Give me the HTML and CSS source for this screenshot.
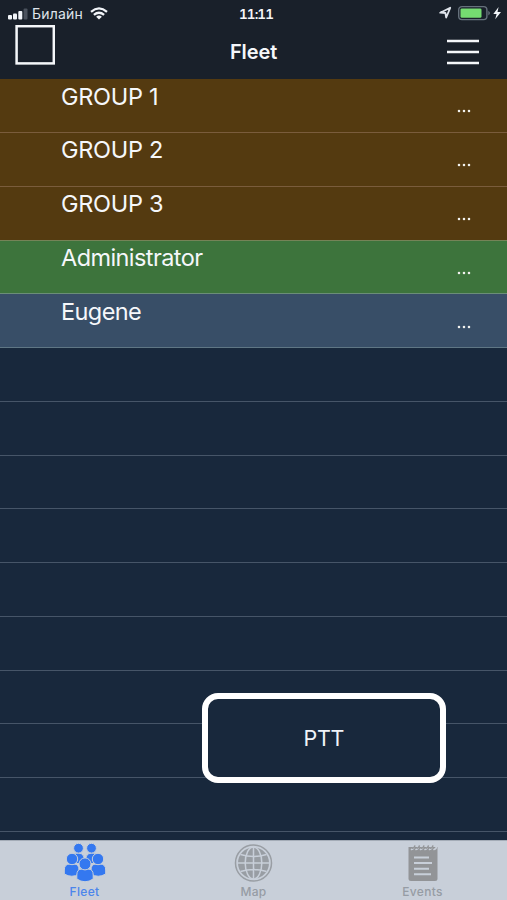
FILE: index.html
```html
<!DOCTYPE html>
<html lang="en">
<head>
<meta charset="utf-8">
<title>Fleet</title>
<link rel="stylesheet" href="styles.css">
</head>
<body>
<div class="app">
  <header class="header">
    <div class="status">
      <div class="carrier">
        <svg width="20" height="12" viewBox="0 0 20 12"><g fill="#f2f5f9"><rect x="0" y="7" width="4" height="4.500" rx="1"/><rect x="5" y="5.500" width="4" height="6" rx="1"/><rect x="10.300" y="3" width="4" height="8.500" rx="1"/></g><rect x="15.600" y="0.500" width="3.900" height="11" rx="1" fill="#4b525d"/></svg>
        <span class="carrier-name">Билайн</span>
        <svg class="wifi" width="18" height="13" viewBox="0 0 18 13"><g fill="none" stroke="#f2f5f9" stroke-width="2.300"><path d="M1 4.800Q9-2 17 4.800"/><path d="M3.900 7.900Q9 3.600 14.100 7.900"/></g><path d="M6.100 9.700Q9 7.400 11.900 9.700L9 12.600Z" fill="#f2f5f9"/></svg>
      </div>
      <span class="time">11:11</span>
      <div class="power">
        <svg width="64" height="16" viewBox="0 0 64 16"><path d="M1.200 7.700L11.200 2.800L7.200 12.500L6.400 8Z" fill="none" stroke="#dfe4eb" stroke-width="1.800" stroke-linejoin="round"/><rect x="19.700" y="1.600" width="28.200" height="13" rx="3.300" fill="none" stroke="#66717c" stroke-width="1.400"/><rect x="21.500" y="3.400" width="21" height="9.400" rx="1.400" fill="#75dc71"/><path d="M49.300 5.700Q52.700 8 49.300 10.400Z" fill="#66717c"/><path d="M59.600 2L54.300 9H57.600L56.200 14.200L62 7.100H58.500Z" fill="#f2f5f9"/></svg>
      </div>
    </div>
    <div class="nav">
      <svg class="square" width="40" height="40" viewBox="0 0 40 40"><rect x="1.600" y="1.200" width="37.200" height="37.200" fill="none" stroke="#f5f7fa" stroke-width="2.500"/></svg>
      <h1 class="title">Fleet</h1>
      <svg class="menu" width="32" height="26" viewBox="0 0 32 26"><path d="M0 2H32M0 13H32M0 24H32" stroke="#f5f7fa" stroke-width="2.700"/></svg>
    </div>
  </header>
  <main class="list">
    <div class="row group"><span class="name">GROUP 1</span><svg class="more" viewBox="0 0 14 4"><path d="M2 2h0M7 2h0M12 2h0"/></svg></div>
    <div class="row group"><span class="name">GROUP 2</span><svg class="more" viewBox="0 0 14 4"><path d="M2 2h0M7 2h0M12 2h0"/></svg></div>
    <div class="row group"><span class="name">GROUP 3</span><svg class="more" viewBox="0 0 14 4"><path d="M2 2h0M7 2h0M12 2h0"/></svg></div>
    <div class="row online"><span class="name person">Administrator</span><svg class="more" viewBox="0 0 14 4"><path d="M2 2h0M7 2h0M12 2h0"/></svg></div>
    <div class="row user"><span class="name person">Eugene</span><svg class="more" viewBox="0 0 14 4"><path d="M2 2h0M7 2h0M12 2h0"/></svg></div>
    <div class="row"></div><div class="row"></div><div class="row"></div>
    <div class="row"></div><div class="row"></div><div class="row"></div>
    <div class="row"></div><div class="row"></div><div class="row"></div>
    <button class="ptt">PTT</button>
  </main>
  <nav class="tabs">
    <div class="tab active">
      <svg width="44" height="42" viewBox="0 0 44 42"><g fill="#3478f0" stroke="#c8cfd9" stroke-width="1"><path d="M9 23V17Q9.500 13 15.500 13Q20 13 21 17V24ZM23 24V17Q24 13 28.500 13Q34.500 13 35 17V23Z"/><circle cx="15.500" cy="8.200" r="4.900"/><circle cx="28.500" cy="8.200" r="4.900"/><path d="M1.300 34V30Q1.300 24 7 24H11Q16 24 16 30V34Q9 38.500 1.300 34ZM28 34V30Q28 24 33 24H37Q42.700 24 42.700 30V34Q35 38.500 28 34Z"/><circle cx="9" cy="19" r="5.700"/><circle cx="35" cy="19" r="5.700"/><path d="M13.800 39V35Q13.800 29 19 29H25Q30.200 29 30.200 35V39Q22 44.500 13.800 39Z"/><circle cx="22" cy="23.900" r="6"/></g></svg>
      <span>Fleet</span>
    </div>
    <div class="tab">
      <svg width="44" height="42" viewBox="0 0 44 42"><g transform="translate(-0.500 0)"><circle cx="22" cy="23" r="15.500" fill="#989da3"/><circle cx="22" cy="23" r="18" fill="none" stroke="#999ea4" stroke-width="1.500"/><g fill="none" stroke="#c8cfd9" stroke-width="1.500"><path d="M22 7V39M6 23H38M9 14.500Q22 18.500 35 14.500M9 31.500Q22 27.500 35 31.500"/><ellipse cx="22" cy="23" rx="8.300" ry="16"/></g></g></svg>
      <span>Map</span>
    </div>
    <div class="tab">
      <svg width="44" height="42" viewBox="0 0 44 42"><path d="M7.500 7H36.500V38.500Q36.500 41 34 41H10Q7.500 41 7.500 38.500Z" fill="#929497"/><g fill="none" stroke="#c8cfd9" stroke-width="1.600" stroke-linecap="round"><path d="M10.500 9.500Q13 9 13 6M15 9.500Q17.500 9 17.500 6M19.500 9.500Q22 9 22 6M24 9.500Q26.500 9 26.500 6M28.500 9.500Q31 9 31 6M33 9.500Q35.500 9 35.500 6"/></g><path d="M11 8.300Q13.500 8 14 5.300M15.500 8.300Q18 8 18.500 5.300M20 8.300Q22.500 8 23 5.300M24.500 8.300Q27 8 27.500 5.300M29 8.300Q31.500 8 32 5.300" fill="none" stroke="#929497" stroke-width="1.300"/><path d="M13 17.500H28M13 23H31M13 28.700H28M13 34.300H30" stroke="#c8cfd9" stroke-width="2"/></svg>
      <span>Events</span>
    </div>
  </nav>
</div>
</body>
</html>
```
FILE: styles.css
```css
* { box-sizing: border-box; }
body { margin: 0; font-family: Inter, "Liberation Sans", sans-serif; }
.app { width: 507px; height: 900px; display: flex; flex-direction: column; overflow: hidden; background: #18283c; color: #f5f7fa; }
.header { height: 79.300px; flex: none; background: #19202a; }
.status { height: 25px; display: grid; grid-template-columns: 1fr auto 1fr; align-items: start; padding: 0 4px 0 8px; }
.carrier { display: flex; align-items: center; padding-top: 6px; }
.carrier-name { margin-left: 4px; width: 52px; font-size: 14px; line-height: 15px; letter-spacing: 0.200px; white-space: nowrap; color: #dfe4eb; }
.carrier svg { flex: none; }
.wifi { margin-left: 6px; }
.time { padding: 6px 0 0 1px; font-size: 13.500px; line-height: 16px; font-weight: 600; font-variant-numeric: tabular-nums; letter-spacing: -0.900px; }
.power { display: flex; justify-content: flex-end; padding-top: 5px; }
.nav { height: 52px; display: grid; grid-template-columns: 1fr auto 1fr; align-items: start; padding: 0 28px 0 15px; }
.title { margin: 15px 0 0 13px; font-size: 20px; line-height: 25px; font-weight: 600; letter-spacing: -0.100px; }
.menu { justify-self: end; margin-top: 14px; }
.list { flex: 1; min-height: 0; position: relative; }
.row { height: 53.770px; display: flex; justify-content: space-between; padding: 0 36px 0 61px; border-bottom: 1px solid #465568; }
.group { background: #543a10; border-color: #7a5c3c; }
.online { background: #3d743c; border-color: #6b8e78; }
.group:has(+ .online) { border-color: #758357; }
.user { background: #384e67; border-color: #5f7684; }
.name { font-size: 23.500px; line-height: 26px; padding-top: 4.300px; letter-spacing: -0.300px; }
.person { letter-spacing: -0.580px; }
.more { width: 14px; height: 4px; margin-top: 30.200px; fill: none; stroke: #f1f1ee; stroke-width: 2.600; stroke-linecap: round; }
.ptt { position: absolute; left: 202px; top: 613.700px; width: 243.500px; height: 90.500px; border: 6px solid #fff; border-radius: 16px; background: #18283c; color: #f0f4f9; font: 21.500px Inter, "Liberation Sans", sans-serif; letter-spacing: -0.300px; padding: 0; }
.tabs { height: 60px; flex: none; display: grid; grid-template-columns: repeat(3, 1fr); background: #c8cfd9; border-top: 1px solid #a4acb7; }
.tab { display: flex; flex-direction: column; align-items: center; font-size: 12px; line-height: 16px; font-weight: 500; letter-spacing: 0.300px; color: #969ca4; }
.tab svg { flex: none; margin: -1px 0 2px; }
.active { color: #4b85eb; }
```
